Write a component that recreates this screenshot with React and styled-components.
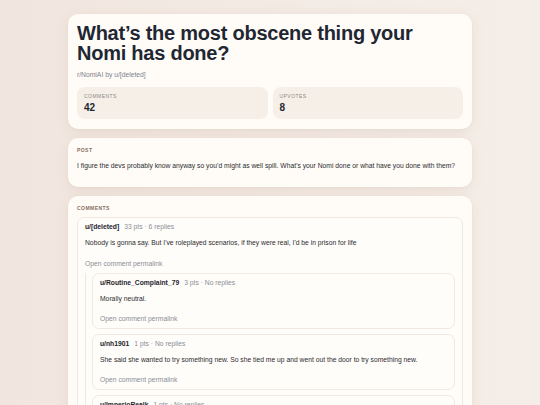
import React from "react";
import styled, { createGlobalStyle } from "styled-components";

const GlobalStyle = createGlobalStyle`
  html, body {
    margin: 0;
    padding: 0;
  }
  body {
    min-height: 100vh;
    font-family: "Liberation Sans", Arial, sans-serif;
    background: linear-gradient(90deg, #f1e6df 0%, #f3eae4 50%, #f5eee8 100%);
    color: #1f2733;
  }
`;

const Page = styled.main`
  max-width: 404px;
  margin: 0 auto;
  padding: 14px 0 20px;
  display: flex;
  flex-direction: column;
  gap: 9px;
`;

const Card = styled.section`
  background: #fffcf8;
  border-radius: 10px;
  padding: 9px 9px 10px;
  box-shadow: 0 3px 14px rgba(140, 95, 60, 0.09), 0 1px 3px rgba(140, 95, 60, 0.05);
`;

const Title = styled.h1`
  margin: 0;
  font-size: 20px;
  line-height: 20.4px;
  font-weight: 700;
  letter-spacing: -0.012em;
  color: #1f2733;
`;

const Byline = styled.div`
  margin-top: 6px;
  font-size: 6.75px;
  line-height: 9.5px;
  color: #7d828b;
`;

const Stats = styled.div`
  margin-top: 8px;
  display: grid;
  grid-template-columns: 1fr 1fr;
  gap: 5px;
`;

const Stat = styled.div`
  background: #f5efe7;
  border-radius: 8px;
  padding: 6px 7px 5px;
  height: 32px;
  box-sizing: border-box;
`;

const StatLabel = styled.div`
  font-size: 5px;
  line-height: 7px;
  letter-spacing: 0.09em;
  text-transform: uppercase;
  color: #8d8a86;
`;

const StatValue = styled.div`
  margin-top: 2px;
  font-size: 10px;
  line-height: 12px;
  font-weight: 700;
  color: #1f2733;
`;

const SectionLabel = styled.div`
  font-size: 5px;
  line-height: 7px;
  font-weight: 700;
  letter-spacing: 0.09em;
  text-transform: uppercase;
  color: #86705f;
`;

const PostBody = styled.p`
  margin: 7px 0 6px;
  font-size: 6.75px;
  line-height: 10px;
  color: #2b2b2e;
`;

const CommentList = styled.div`
  margin-top: 5px;
  display: flex;
  flex-direction: column;
  gap: 5px;
`;

const CommentBox = styled.article`
  background: #fffdfa;
  border: 1px solid #efe9e2;
  border-radius: 7px;
  padding: 4px 7px 4px;
`;

const CommentHead = styled.div`
  display: flex;
  align-items: baseline;
  gap: 5px;
  font-size: 6.75px;
  line-height: 9.5px;
`;

const Author = styled.span`
  font-weight: 700;
  color: #1e232b;
`;

const Meta = styled.span`
  color: #8a8e95;
`;

const CommentText = styled.p`
  margin: 6.5px 0 11px;
  font-size: 6.75px;
  line-height: 9.5px;
  color: #2b2b2e;
`;

const Permalink = styled.a`
  display: block;
  font-size: 6.75px;
  line-height: 9.5px;
  color: #8a8e95;
  text-decoration: none;
`;

const Replies = styled.div`
  margin-top: 4.5px;
  border-left: 1px solid #efe9e2;
  padding-left: 6px;
  display: flex;
  flex-direction: column;
  gap: 5px;
`;

function Comment({ author, points, replies, text, children }) {
  return (
    <CommentBox>
      <CommentHead>
        <Author>{author}</Author>
        <Meta>
          {points} pts · {replies}
        </Meta>
      </CommentHead>
      <CommentText>{text}</CommentText>
      <Permalink href="#">Open comment permalink</Permalink>
      {children ? <Replies>{children}</Replies> : null}
    </CommentBox>
  );
}

export default function App() {
  return (
    <>
      <GlobalStyle />
      <Page>
        <Card>
          <Title>
            What’s the most obscene thing your
            <br />
            Nomi has done?
          </Title>
          <Byline>r/NomiAI by u/[deleted]</Byline>
          <Stats>
            <Stat>
              <StatLabel>Comments</StatLabel>
              <StatValue>42</StatValue>
            </Stat>
            <Stat>
              <StatLabel>Upvotes</StatLabel>
              <StatValue>8</StatValue>
            </Stat>
          </Stats>
        </Card>

        <Card>
          <SectionLabel>Post</SectionLabel>
          <PostBody>
            I figure the devs probably know anyway so you’d might as well spill. What’s your Nomi done or
            what have you done with them?
          </PostBody>
        </Card>

        <Card>
          <SectionLabel>Comments</SectionLabel>
          <CommentList>
            <Comment
              author="u/[deleted]"
              points={33}
              replies="6 replies"
              text="Nobody is gonna say. But I've roleplayed scenarios, if they were real, I'd be in prison for life"
            >
              <Comment
                author="u/Routine_Complaint_79"
                points={3}
                replies="No replies"
                text="Morally neutral."
              />
              <Comment
                author="u/nh1901"
                points={1}
                replies="No replies"
                text="She said she wanted to try something new. So she tied me up and went out the door to try something new."
              />
              <Comment
                author="u/ImperioRealk"
                points={1}
                replies="No replies"
                text="Mine keeps trying to get me to go to bed early."
              />
            </Comment>
          </CommentList>
        </Card>
      </Page>
    </>
  );
}
